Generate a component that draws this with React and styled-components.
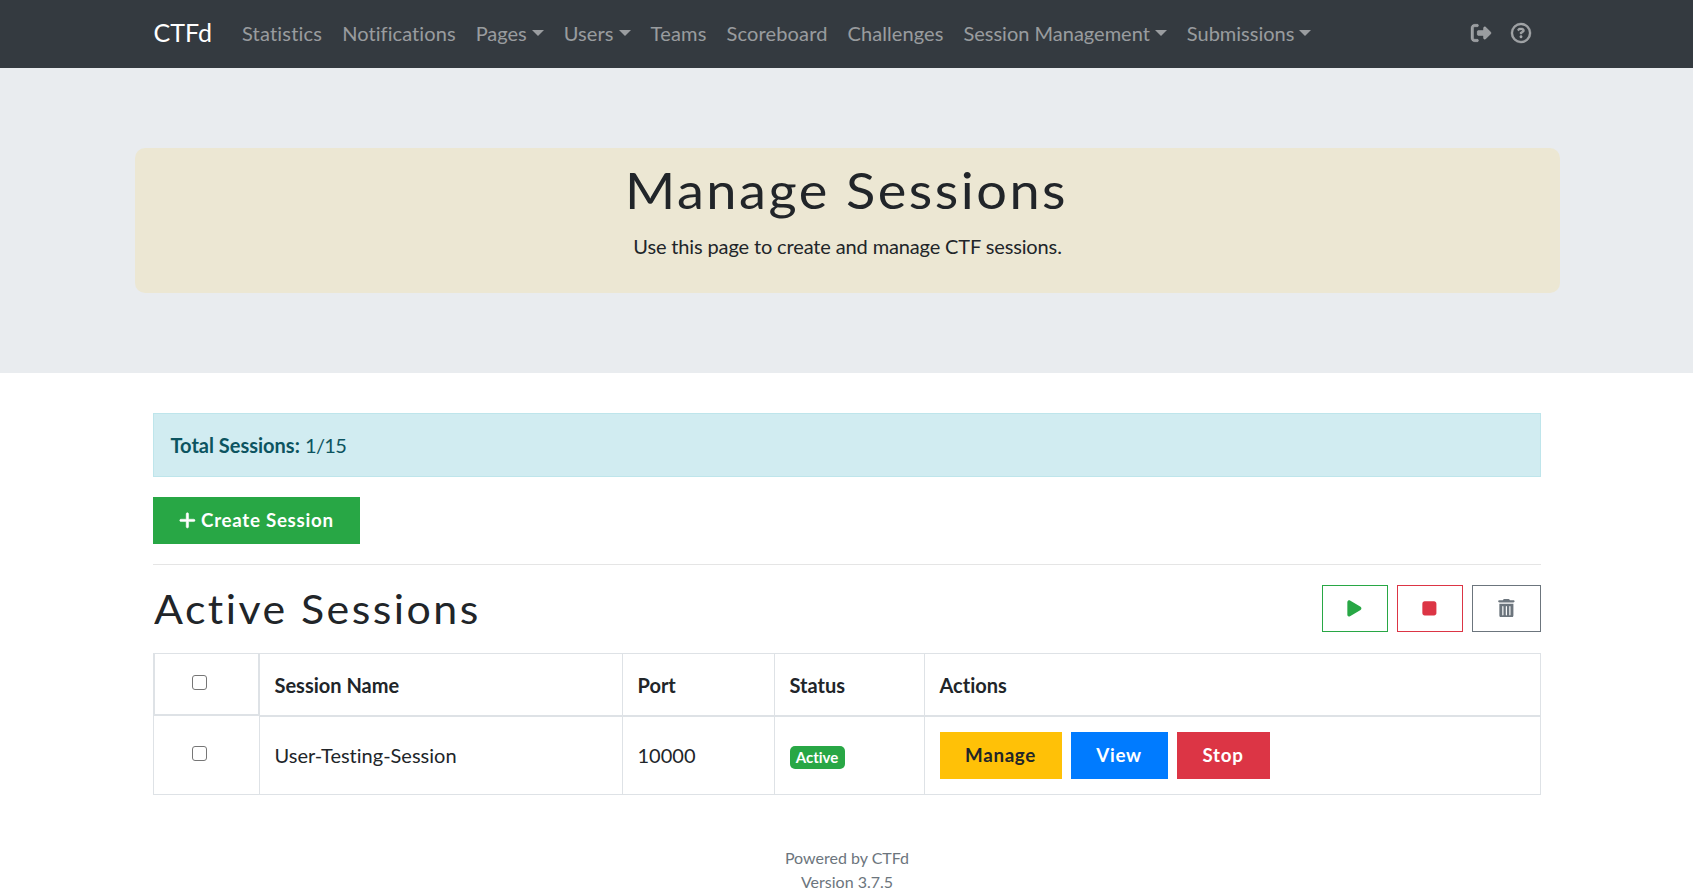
import React from "react";
import styled, { createGlobalStyle } from "styled-components";
import { FaPlus, FaPlay, FaStop, FaTrashCan, FaRightFromBracket, FaRegCircleQuestion } from "react-icons/fa6";

const GlobalStyle = createGlobalStyle`
  *, *::before, *::after { box-sizing: border-box; }
  body {
    margin: 0;
    background: #fff;
    color: #212529;
    font: 400 20px/30px Lato, "Liberation Sans", sans-serif;
    font-variant-ligatures: none;
    overflow: hidden;
  }
`;

const Page = styled.div`
  height: 894px;
  overflow: hidden;
`;

const Navbar = styled.nav`
  height: 68px;
  background: #343a40;
`;

const NavInner = styled.div`
  width: 1388px;
  height: 100%;
  margin: 0 auto;
  padding: 0 0 2px 1px;
  display: flex;
  align-items: center;
`;

const Brand = styled.span`
  color: #fff;
  font-size: 25px;
  line-height: 32px;
  padding-bottom: 2px;
  margin-right: 20px;
`;

const NavLinks = styled.div`
  display: flex;
  align-items: center;
  margin-left: ${(p) => (p.$end ? "auto" : "0")};
`;

const NavLink = styled.span`
  display: flex;
  align-items: center;
  padding: 0 10px;
  color: rgba(255, 255, 255, 0.5);
  letter-spacing: ${(p) => p.$track || 0}px;
  white-space: nowrap;
  svg {
    display: block;
    overflow: visible;
  }
`;

const Caret = styled.span`
  margin: -1px 0 0 5px;
  border-top: 6px solid;
  border-left: 6px solid transparent;
  border-right: 6px solid transparent;
`;

const Jumbotron = styled.header`
  height: 305px;
  padding-top: 80px;
  background: #e9ecef;
`;

const Banner = styled.div`
  width: 1425px;
  height: 145px;
  margin: 0 0 0 135px;
  padding-top: 12px;
  border-radius: 10px;
  background: #ece7d3;
  text-align: center;
`;

const Title = styled.h1`
  margin: 0 2px 11px 0;
  font-size: 50px;
  line-height: 60px;
  font-weight: 400;
  letter-spacing: 2.3px;
  transform: scaleX(1.083);
`;

const Text = styled.p`
  margin: 0;
  letter-spacing: -0.135px;
`;

const Main = styled.main`
  width: 1388px;
  margin: 40px auto 0;
`;

const Alert = styled.div`
  height: 64px;
  padding: 16px 17px;
  border: 1px solid #bee5eb;
  background: #d1ecf1;
  color: #0c5460;
  margin-bottom: 20px;
`;

const Count = styled.span`
  letter-spacing: -0.6px;
`;

const tones = {
  success: ["#28a745", "#fff"],
  warning: ["#ffc107", "#212529"],
  primary: ["#007bff", "#fff"],
  danger: ["#dc3545", "#fff"],
  secondary: ["#6c757d", "#fff"],
};

const Button = styled.button`
  display: flex;
  align-items: center;
  justify-content: center;
  gap: 4px;
  width: ${(p) => p.$width}px;
  height: 47px;
  padding: 0 0 1px;
  border: 1px solid ${(p) => tones[p.$tone][0]};
  border-radius: 0;
  background: ${(p) => (p.$outline ? "transparent" : tones[p.$tone][0])};
  color: ${(p) => tones[p.$tone][p.$outline ? 0 : 1]};
  font: 700 18.75px/28px Lato, "Liberation Sans", sans-serif;
  letter-spacing: 0.7px;
  white-space: nowrap;
`;

const Divider = styled.hr`
  height: 1px;
  margin: 20px 0;
  border: 0;
  background: #e5e5e5;
`;

const SectionHead = styled.div`
  display: flex;
  justify-content: space-between;
  align-items: flex-start;
  height: 68px;
`;

const SectionTitle = styled.h2`
  margin: 0 0 0 1px;
  font-size: 40px;
  line-height: 49px;
  font-weight: 400;
  letter-spacing: 2.3px;
  transform: scaleX(1.072);
  transform-origin: left;
`;

const ButtonGroup = styled.div`
  display: flex;
  gap: 9px;
`;

const Table = styled.table`
  width: 1388px;
  table-layout: fixed;
  border-collapse: separate;
  border-spacing: 0;
`;

const HeadCell = styled.th`
  height: 64px;
  padding: 0 15px;
  border: solid #dee2e6;
  border-width: 1px 1px 2px 0;
  text-align: left;
  font-weight: 700;
`;

const CheckHeadCell = styled(HeadCell)`
  padding: 0;
  border-width: 1px 1px 0 1px;
  vertical-align: top;
`;

const CheckFrame = styled.div`
  height: 62px;
  padding: 21px 0 0 37px;
  border: solid #dee2e6;
  border-width: 0 1px 2px 1px;
`;

const Cell = styled.td`
  height: 78px;
  padding: 0 15px ${(p) => (p.$text ? 2 : 0)}px;
  border: solid #dee2e6;
  border-width: 0 1px 1px 0;
`;

const CheckCell = styled(Cell)`
  padding: 29px 0 0 38px;
  border-left-width: 1px;
  vertical-align: top;
`;

const Check = styled.input`
  display: block;
  width: 15px;
  height: 15px;
  margin: 0;
  appearance: none;
  border: 1px solid #767676;
  border-radius: 3px;
  background: #fff;
`;

const Badge = styled.span`
  display: block;
  width: 55px;
  height: 23px;
  margin-top: 4px;
  border-radius: 5px;
  background: #28a745;
  color: #fff;
  font-size: 15px;
  line-height: 23px;
  font-weight: 700;
  text-align: center;
`;

const Footer = styled.footer`
  margin-top: 51px;
  padding-left: 1px;
  text-align: center;
  color: #6c757d;
  font-size: 16px;
  line-height: 24px;
`;

const links = [
  { label: "Statistics", track: 0.2 },
  { label: "Notifications", track: 0.08 },
  { label: "Pages", menu: true },
  { label: "Users", menu: true, track: 0.1 },
  { label: "Teams", track: 0.2 },
  { label: "Scoreboard", track: 0.15 },
  { label: "Challenges", track: 0.08 },
  { label: "Session Management", menu: true },
  { label: "Submissions", menu: true },
];

export default function App() {
  return (
    <Page>
      <GlobalStyle />
      <Navbar>
        <NavInner>
          <Brand>CTFd</Brand>
          <NavLinks>
            {links.map(({ label, menu, track }) => (
              <NavLink key={label} $track={track}>{label}{menu && <Caret />}</NavLink>
            ))}
          </NavLinks>
          <NavLinks $end>
            <NavLink><FaRightFromBracket size={20} strokeWidth={10} stroke="currentColor" /></NavLink>
            <NavLink><FaRegCircleQuestion size={20} strokeWidth={12} stroke="currentColor" /></NavLink>
          </NavLinks>
        </NavInner>
      </Navbar>
      <Jumbotron>
        <Banner>
          <Title>Manage Sessions</Title>
          <Text>Use this page to create and manage CTF sessions.</Text>
        </Banner>
      </Jumbotron>
      <Main>
        <Alert><strong>Total Sessions:</strong> <Count>1/15</Count></Alert>
        <Button $tone="success" $width={207}><FaPlus size={18.75} strokeWidth={14} stroke="currentColor" />Create Session</Button>
        <Divider />
        <SectionHead>
          <SectionTitle>Active Sessions</SectionTitle>
          <ButtonGroup>
            <Button $tone="success" $outline $width={66}><FaPlay size={18.75} /></Button>
            <Button $tone="danger" $outline $width={66}><FaStop size={18.75} /></Button>
            <Button $tone="secondary" $outline $width={69}><FaTrashCan size={18.75} /></Button>
          </ButtonGroup>
        </SectionHead>
        <Table>
          <colgroup>
            <col width="107" />
            <col width="363" />
            <col width="152" />
            <col width="150" />
            <col />
          </colgroup>
          <thead>
            <tr>
              <CheckHeadCell><CheckFrame><Check type="checkbox" /></CheckFrame></CheckHeadCell>
              <HeadCell>Session Name</HeadCell>
              <HeadCell>Port</HeadCell>
              <HeadCell>Status</HeadCell>
              <HeadCell>Actions</HeadCell>
            </tr>
          </thead>
          <tbody>
            <tr>
              <CheckCell><Check type="checkbox" /></CheckCell>
              <Cell $text>User-Testing-Session</Cell>
              <Cell $text>10000</Cell>
              <Cell><Badge>Active</Badge></Cell>
              <Cell>
                <ButtonGroup>
                  <Button $tone="warning" $width={122}>Manage</Button>
                  <Button $tone="primary" $width={97}>View</Button>
                  <Button $tone="danger" $width={93}>Stop</Button>
                </ButtonGroup>
              </Cell>
            </tr>
          </tbody>
        </Table>
      </Main>
      <Footer>Powered by CTFd<br />Version 3.7.5</Footer>
    </Page>
  );
}
